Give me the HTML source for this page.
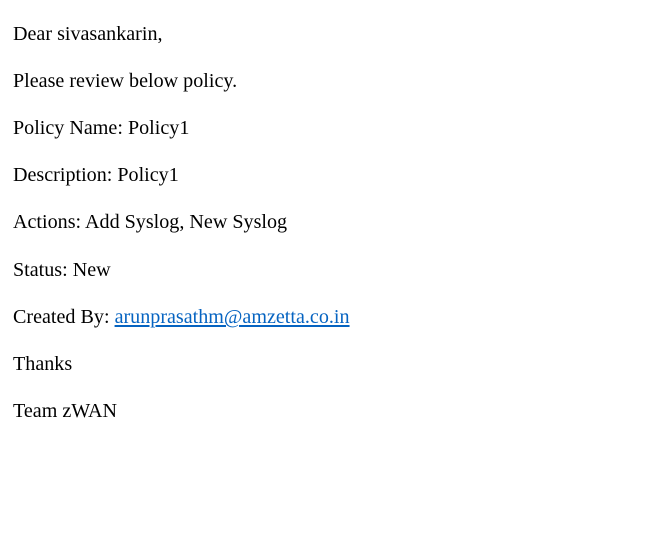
<!DOCTYPE html>
<html><head><meta charset="utf-8"><style>
html,body{margin:0;padding:0;background:#fff;width:656px;height:537px;overflow:hidden}
body{font-family:"Liberation Serif","Times New Roman",serif;font-size:20.1px;color:#000}
.l{position:absolute;left:13px;line-height:22px;white-space:nowrap}
a{color:#0563C1;text-decoration:underline}
</style></head><body>
<div class="l" style="top:23px">Dear sivasankarin,</div>
<div class="l" style="top:70px">Please review below policy.</div>
<div class="l" style="top:117px">Policy Name: Policy1</div>
<div class="l" style="top:164px">Description: Policy1</div>
<div class="l" style="top:211px">Actions: Add Syslog, New Syslog</div>
<div class="l" style="top:259px">Status: New</div>
<div class="l" style="top:306px">Created By: <a>arunprasathm@amzetta.co.in</a></div>
<div class="l" style="top:353px">Thanks</div>
<div class="l" style="top:400px">Team zWAN</div>
</body></html>
